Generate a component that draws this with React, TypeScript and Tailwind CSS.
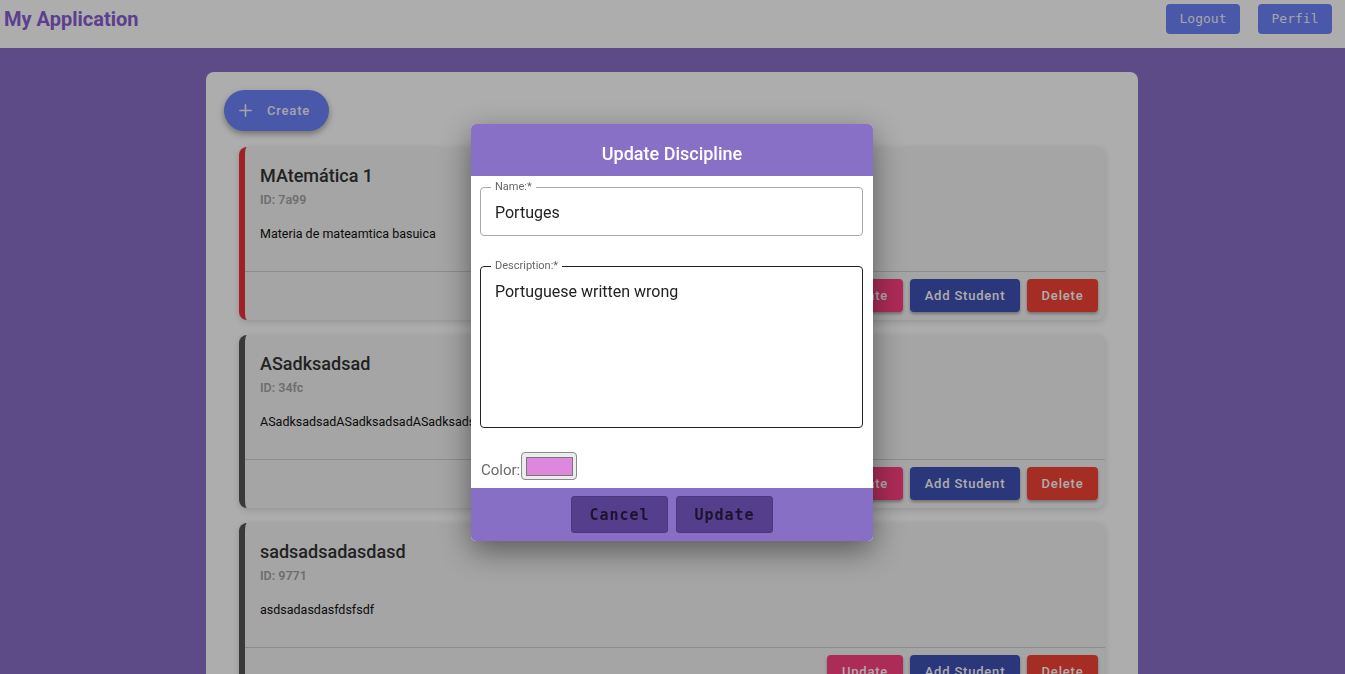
import React from "react";

const cards = [
  { title: "MAtemática 1", id: "7a99", desc: "Materia de mateamtica basuica", color: "border-l-[#ec3237]" },
  { title: "ASadksadsad", id: "34fc", desc: "ASadksadsadASadksadsadASadksadsadASadksadsad", color: "border-l-[#555555]" },
  { title: "sadsadsadasdasd", id: "9771", desc: "asdsadasdasfdsfsdf", color: "border-l-[#555555]" },
];

function Card({ title, id, desc, color }: { title: string; id: string; desc: string; color: string }) {
  return (
    <div className={`bg-[#f3f3f3] rounded-lg border-l-[6px] ${color} shadow-[0_2px_6px_rgba(0,0,0,0.15)] h-[173px] flex flex-col`}>
      <div className="h-[125px] pl-[15px] pt-[17px] border-b border-[#cfcfcf]">
        <div className="text-[18px] font-medium text-[#333] leading-[24px]">{title}</div>
        <div className="text-[12.5px] font-semibold text-[#a3a3a3] mt-[4px] leading-[16px]">ID: {id}</div>
        <div className="text-[12.5px] text-[#111] mt-[18px] leading-[16px] whitespace-nowrap overflow-hidden">{desc}</div>
      </div>
      <div className="flex justify-end gap-[7px] pr-[7px] pt-[7px]">
        <button className="w-[76px] h-[33px] rounded-[4px] bg-[#ff4081] text-white text-[13px] font-medium tracking-[0.8px] shadow-[0_2px_3px_rgba(0,0,0,0.3)]">Update</button>
        <button className="w-[110px] h-[33px] rounded-[4px] bg-[#3f51b5] text-white text-[13px] font-medium tracking-[0.8px] shadow-[0_2px_3px_rgba(0,0,0,0.3)]">Add Student</button>
        <button className="w-[71px] h-[33px] rounded-[4px] bg-[#f44336] text-white text-[13px] font-medium tracking-[0.8px] shadow-[0_2px_3px_rgba(0,0,0,0.3)]">Delete</button>
      </div>
    </div>
  );
}

export default function App() {
  return (
    <div className="min-h-screen bg-[#8a6fc8] font-['Roboto',sans-serif]">
      <header className="h-[48px] bg-white flex items-center justify-between pl-[4px] pr-[13px]">
        <div className="text-[20px] font-bold text-[#885dd1] -mt-[10px]">My Application</div>
        <div className="flex gap-[18px] -mt-[10px]">
          <button className="w-[74px] h-[30px] rounded-[4px] bg-[#6d82f9] text-[#f2f2ff] text-[13px] font-['DejaVu_Sans_Mono',monospace]">Logout</button>
          <button className="w-[74px] h-[30px] rounded-[4px] bg-[#6d82f9] text-[#f2f2ff] text-[13px] font-['DejaVu_Sans_Mono',monospace]">Perfil</button>
        </div>
      </header>
      <main className="pt-[24px] pr-[1px]">
        <div className="mx-auto w-[932px] bg-white rounded-[8px] pt-[18px] px-[18px] pb-[30px]">
          <button className="h-[41px] w-[105px] rounded-full bg-[#6d82f9] text-[#f2f2ff] flex items-center pl-[14px] gap-[14px] text-[13px] font-medium tracking-[0.8px] shadow-[0_3px_6px_rgba(0,0,0,0.35)]">
            <svg width="15" height="15" viewBox="0 0 24 24" fill="none" stroke="currentColor" strokeWidth="2.6" strokeLinecap="round">
              <path d="M12 3v18M3 12h18" />
            </svg>
            Create
          </button>
          <div className="mt-[16px] px-[15px] flex flex-col gap-[15px]">
            {cards.map((c) => (
              <Card key={c.id} {...c} />
            ))}
          </div>
        </div>
      </main>

      <div className="fixed inset-0 bg-black/[0.32]" />

      <div className="fixed top-[124px] left-[471px] w-[402px] rounded-[5px] overflow-hidden bg-white shadow-[0_10px_30px_rgba(0,0,0,0.45)]">
        <div className="h-[52px] bg-[#8870c6] flex items-center justify-center pt-[6px] text-white text-[18px] font-medium">Update Discipline</div>
        <div className="pl-[9px] pr-[10px] pt-[5px] h-[312px] flex flex-col">
          <fieldset className="border border-[#a8a8a8] rounded-[4px] h-[55px] px-[10px] pb-0">
            <legend className="text-[11px] text-[#666] px-[4px] leading-[12px]">Name:*</legend>
            <div className="text-[16px] text-[#222] pl-[4px] pt-[10px] leading-[20px]">Portuges</div>
          </fieldset>
          <fieldset className="border border-[#222] rounded-[4px] h-[168px] mt-[24px] px-[10px]">
            <legend className="text-[11px] text-[#666] px-[4px] leading-[12px] mt-[2px]">Description:*</legend>
            <div className="text-[16px] text-[#222] pl-[4px] pt-[10px] leading-[20px]">Portuguese written wrong</div>
          </fieldset>
          <div className="flex items-end mt-[24px] pl-[1px]">
            <span className="text-[15px] text-[#6a6a6a] leading-[18px] mb-[1px]">Color:</span>
            <div className="w-[56px] h-[28px] bg-[#ececef] border border-[#8a8a8a] rounded-[4px] flex items-center justify-center ml-[1px]">
              <div className="w-[47px] h-[19px] bg-[#dd88dd] border border-[#777]" />
            </div>
          </div>
        </div>
        <div className="h-[53px] bg-[#886fc6] flex justify-center gap-[8px] pt-[8px]">
          <button className="w-[97px] h-[37px] rounded-[3px] bg-[#553f8c] border border-[#4d3880] text-[#1a1430] text-[15px] font-bold tracking-[1px] pt-[2px] font-['DejaVu_Sans_Mono',monospace]">Cancel</button>
          <button className="w-[97px] h-[37px] rounded-[3px] bg-[#553f8c] border border-[#4d3880] text-[#1a1430] text-[15px] font-bold tracking-[1px] pt-[2px] font-['DejaVu_Sans_Mono',monospace]">Update</button>
        </div>
      </div>
    </div>
  );
}
